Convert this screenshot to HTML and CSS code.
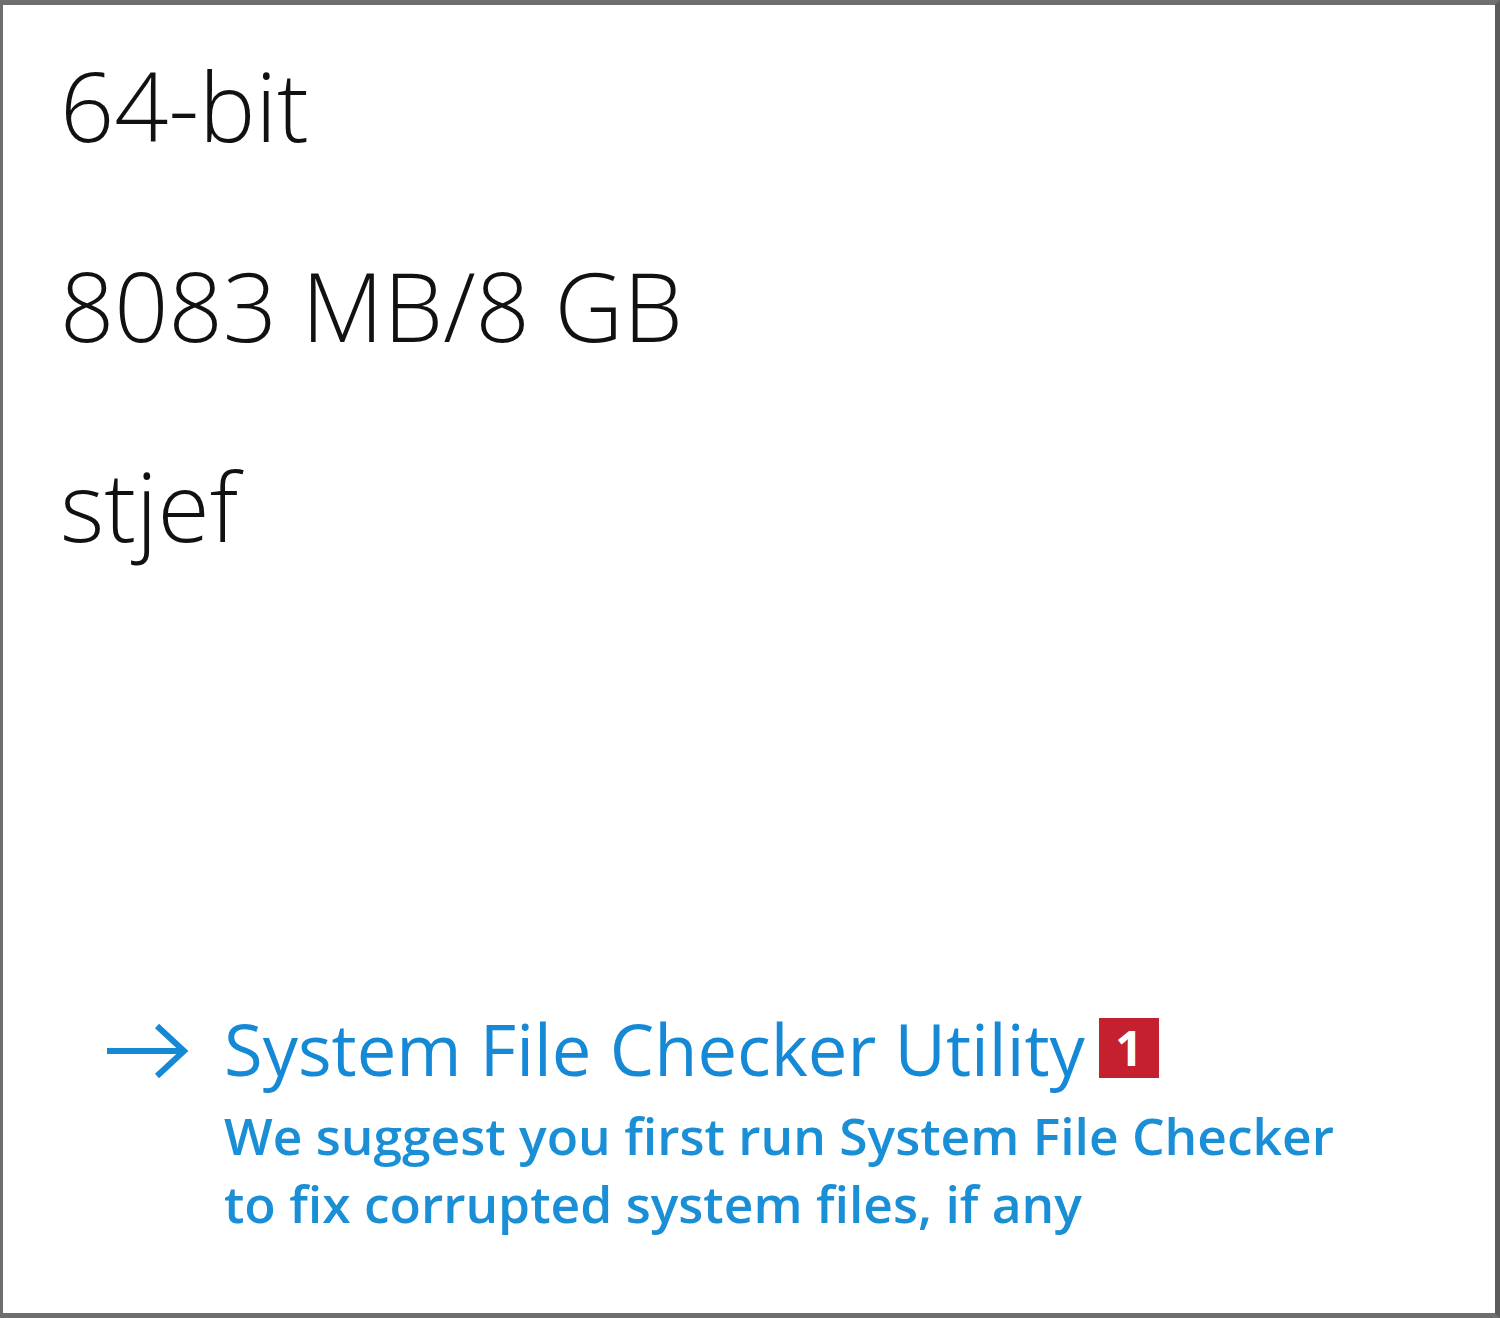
FILE: index.html
```html
<!DOCTYPE html>
<html lang="en">
<head>
<meta charset="UTF-8">
<title>System info</title>
<link rel="stylesheet" href="styles.css">
</head>
<body>
<div class="panel">
  <div class="infos">
    <div class="info">64-bit</div>
    <div class="info">8083 MB/8 GB</div>
    <div class="info">stjef</div>
  </div>

  <div class="sfc">
    <svg class="arrow" width="84" height="60" viewBox="0 0 84 60">
      <path d="M2 30 H78 M52 5 L79 30 L52 55" fill="none" stroke="#1589d6" stroke-width="6"/>
    </svg>
    <div class="sfc-text">
      <div class="sfc-title">System File Checker Utility<span class="badge">1</span></div>
      <div class="sfc-desc">We suggest you first run System File Checker<br>to fix corrupted system files, if any</div>
    </div>
  </div>
</div>
</body>
</html>
```

FILE: styles.css
```css
body {
  margin: 0;
  background: #fff;
}

.panel {
  width: 1500px;
  height: 1318px;
  box-sizing: border-box;
  border-top: 5px solid #6e6e6e;
  border-left: 3px solid #6e6e6e;
  border-right: 5px solid #5a5a5a;
  border-bottom: 5px solid #6e6e6e;
  display: flex;
  flex-direction: column;
  font-family: "Open Sans", "Noto Sans", sans-serif;
}

.infos {
  padding: 40px 0 0 57px;
}

.info {
  font-size: 95px;
  font-weight: 300;
  color: #111;
  line-height: 200px;
  height: 200px;
  margin-top: -40px;
  margin-bottom: 40px;
}

.sfc {
  margin-top: auto;
  display: flex;
  align-items: flex-start;
  padding: 0 0 76px 102px;
}

.arrow {
  margin-top: 22px;
  margin-right: 35px;
}

.sfc-title {
  font-size: 70.5px;
  color: #1589d6;
  line-height: 100px;
}

.badge {
  display: inline-block;
  margin-left: 14px;
  background: #c4202f;
  color: #fff;
  font-weight: 700;
  font-size: 48px;
  width: 60px;
  height: 60px;
  line-height: 60px;
  text-align: center;
  vertical-align: 10px;
}

.sfc-desc {
  font-size: 51.5px;
  font-weight: 600;
  color: #1a8fd6;
  line-height: 68px;
  margin-top: 2px;
}
```
